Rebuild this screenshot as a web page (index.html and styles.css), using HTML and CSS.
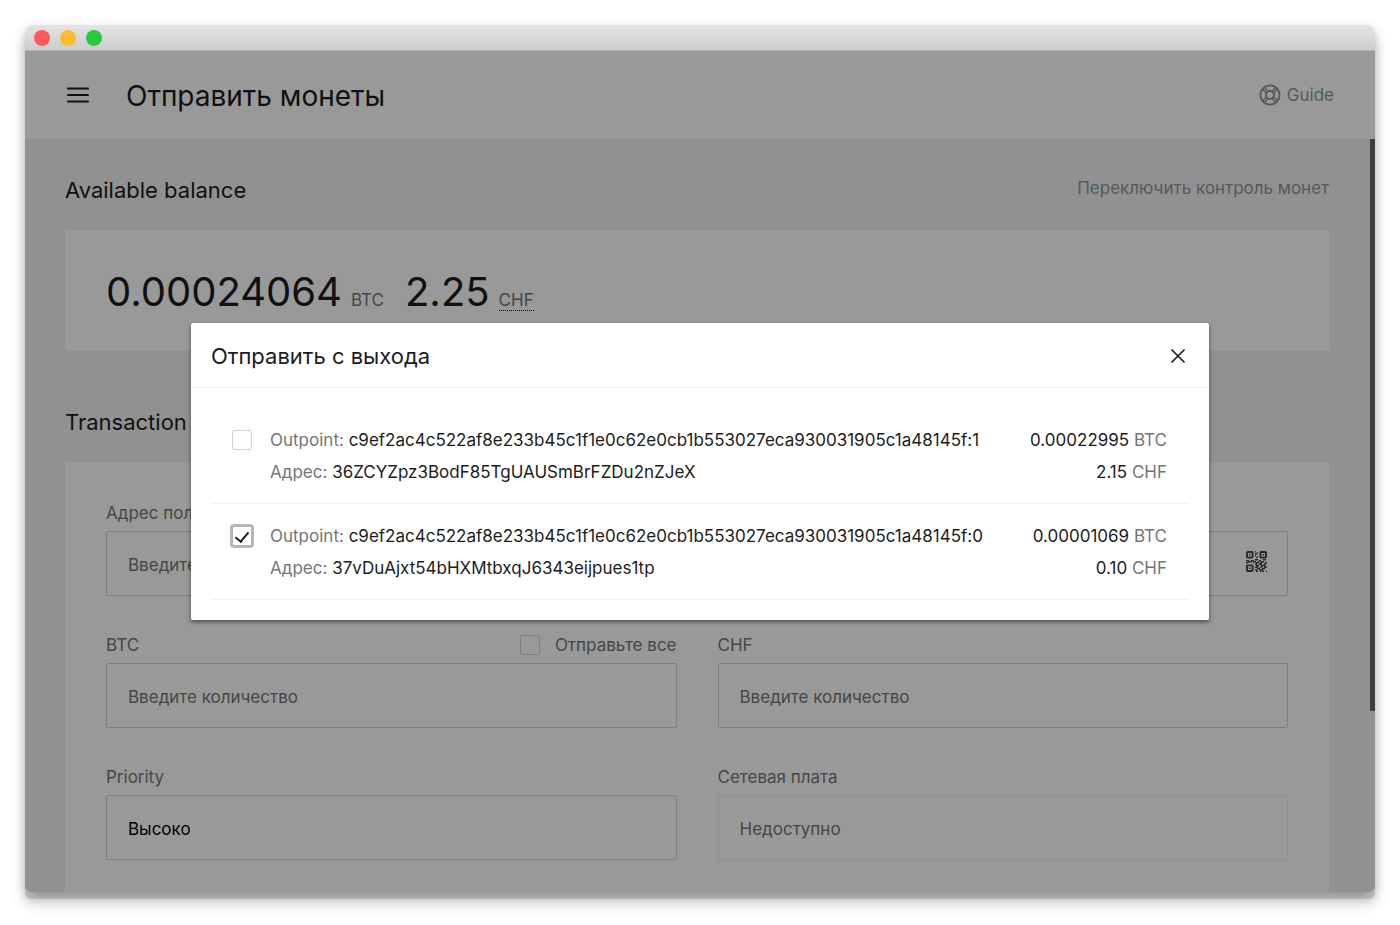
FILE: index.html
```
<!DOCTYPE html>
<html lang="ru">
<head>
  <meta charset="UTF-8">
  <meta name="viewport" content="width=device-width, initial-scale=1.0">
  <title>Отправить монеты</title>
  <link rel="stylesheet" href="styles.css">
</head>
<body>

  <div class="window">
    <div class="titlebar">
      <span class="dot red"></span>
      <span class="dot yellow"></span>
      <span class="dot green"></span>
    </div>

    <div class="app">
      <header class="header">
        <button class="menu-button" type="button" aria-label="Menu">
          <svg width="22" height="16" viewBox="0 0 22 16" fill="none" stroke="currentColor" stroke-width="2" stroke-linecap="round">
            <path d="M1 1.5h20M1 8h20M1 14.5h20" />
          </svg>
        </button>
        <h1>Отправить монеты</h1>
        <a class="guide" href="#guide">
          <svg width="22" height="22" viewBox="0 0 22 22" fill="none" stroke="currentColor" stroke-width="1.9">
            <circle cx="11" cy="11" r="9.6" />
            <circle cx="11" cy="11" r="4" />
            <path d="M3.6 5.2l4 4M5.2 3.6l4 4M18.4 5.2l-4 4M16.8 3.6l-4 4M3.6 16.8l4-4M5.2 18.4l4-4M18.4 16.8l-4-4M16.8 18.4l-4-4" stroke-width="1.4" />
          </svg>
          Guide
        </a>
      </header>

      <div class="content">
        <main class="main">
          <div class="section-head">
            <h2>Available balance</h2>
            <a class="toggle" href="#coin-control">Переключить контроль монет</a>
          </div>
          <div class="card balance">
            <span class="amount">0.00024064</span>
            <span class="unit">BTC</span>
            <span class="amount fiat">2.25</span>
            <span class="unit dotted">CHF</span>
          </div>

          <div class="section-head">
            <h2>Transaction details</h2>
          </div>
          <form class="card form">
            <div class="field wide">
              <label for="address">Адрес получателя</label>
              <div class="input-wrap">
                <input id="address" type="text" placeholder="Введите адрес">
                <button class="qr-button" type="button" aria-label="QR">
                  <svg width="21" height="21" viewBox="0 0 21 21" fill="none" stroke="currentColor">
                    <rect x="1" y="1" width="5.6" height="5.6" rx="0.8" stroke-width="1.9" />
                    <rect x="14.4" y="1" width="5.6" height="5.6" rx="0.8" stroke-width="1.9" />
                    <rect x="1" y="14.4" width="5.6" height="5.6" rx="0.8" stroke-width="1.9" />
                    <path d="M3 3.7h1.5M16.6 3.7h1.5M3 17.3h1.5M9 .7h1M11 1.7h1M9 2.7h2M9 4.7h1M11 5.7h1M10 6.7h1M9 8.7h3M0 9.7h3M5 9.7h3M13 9.7h2M17 8.7h3M2 10.7h4M8 10.7h2M12 10.7h1M15 10.7h3M0 11.7h2M7 11.7h1M10 11.7h3M14 11.7h2M19 11.7h2M9 13.2h2M13 13.2h3M18 13.2h2M10 14.6h3M15 14.6h4M9 16h3M14 16h2M18 16h3M11 17.4h3M16 17.4h3M9 18.8h2M13 18.8h4M10 20.2h2M14 20.2h1M16 20.2h2M20 20.2h1" stroke-width="1.5" />
                  </svg>
                </button>
              </div>
            </div>
            <div class="field">
              <div class="label-row">
                <label for="btc">BTC</label>
                <label class="send-all"><input class="checkbox" type="checkbox">Отправьте все</label>
              </div>
              <input id="btc" type="text" placeholder="Введите количество">
            </div>
            <div class="field">
              <label for="chf">CHF</label>
              <input id="chf" type="text" placeholder="Введите количество">
            </div>
            <div class="field">
              <label for="priority">Priority</label>
              <select id="priority">
                <option>Высоко</option>
              </select>
            </div>
            <div class="field">
              <label for="fee">Сетевая плата</label>
              <input id="fee" type="text" placeholder="Недоступно" disabled>
            </div>
          </form>
        </main>
        <div class="scroll-track"><div class="scroll-thumb"></div></div>
      </div>

      <div class="overlay">
        <div class="modal" role="dialog" aria-labelledby="modal-title">
          <div class="modal-header">
            <h3 id="modal-title">Отправить с выхода</h3>
            <button class="close-button" type="button" aria-label="Close">
              <svg width="14" height="14" viewBox="0 0 14 14" fill="none" stroke="currentColor" stroke-width="1.7" stroke-linecap="round">
                <path d="M1 1l12 12M13 1L1 13" />
              </svg>
            </button>
          </div>
          <ul class="utxos">
            <li>
              <input class="checkbox" id="utxo-1" type="checkbox">
              <label class="utxo" for="utxo-1">
                <span><span class="muted">Outpoint:</span> c9ef2ac4c522af8e233b45c1f1e0c62e0cb1b553027eca930031905c1a48145f:1</span>
                <span><span class="muted">Адрес:</span> 36ZCYZpz3BodF85TgUAUSmBrFZDu2nZJeX</span>
              </label>
              <div class="value">
                <span>0.00022995 <span class="muted">BTC</span></span>
                <span>2.15 <span class="muted">CHF</span></span>
              </div>
            </li>
            <li>
              <input class="checkbox" id="utxo-0" type="checkbox" checked>
              <label class="utxo" for="utxo-0">
                <span><span class="muted">Outpoint:</span> c9ef2ac4c522af8e233b45c1f1e0c62e0cb1b553027eca930031905c1a48145f:0</span>
                <span><span class="muted">Адрес:</span> 37vDuAjxt54bHXMtbxqJ6343eijpues1tp</span>
              </label>
              <div class="value">
                <span>0.00001069 <span class="muted">BTC</span></span>
                <span>0.10 <span class="muted">CHF</span></span>
              </div>
            </li>
          </ul>
        </div>
      </div>
    </div>
  </div>

</body>
</html>
```
FILE: styles.css
```
* {
  box-sizing: border-box;
}

body {
  margin: 0;
  padding: 25px 25px 33px;
  height: 100vh;
  display: flex;
  background: #fff;
  color: #1c1c1c;
  font-family: Inter, "Liberation Sans", sans-serif;
  font-size: 17px;
  line-height: 26px;
}

h1, h2, h3 {
  margin: 0;
  font-weight: 400;
}

a {
  color: #8c959b;
  text-decoration: none;
}

button {
  display: flex;
  padding: 0;
  border: none;
  background: none;
  color: inherit;
  cursor: pointer;
}

.window {
  flex: 1;
  min-width: 0;
  display: flex;
  flex-direction: column;
  border-radius: 8px 8px 5px 5px;
  overflow: hidden;
  box-shadow: 0 7px 1px rgba(0, 0, 0, 0.14), 0 10px 14px rgba(0, 0, 0, 0.26), 0 2px 12px rgba(0, 0, 0, 0.1);
}

.titlebar {
  display: flex;
  align-items: center;
  gap: 10px;
  height: 26px;
  padding: 0 9px;
  background: linear-gradient(#e4e4e4, #cdcdcd);
  border-bottom: 1px solid #b4b4b4;
}

.dot {
  width: 16px;
  height: 16px;
  border-radius: 50%;
}

.red { background: #fc5b57; }
.yellow { background: #fdbc2e; }
.green { background: #27c93f; }

.app {
  position: relative;
  flex: 1;
  min-height: 0;
  display: flex;
  flex-direction: column;
  background: #f2f2f2;
}

.header {
  flex: none;
  display: flex;
  align-items: center;
  gap: 37px;
  height: 88px;
  padding: 0 41px 0 42px;
  background: #fff;
}

.header h1 {
  padding-top: 2px;
  font-size: 28px;
  line-height: 40px;
}

.guide {
  display: flex;
  align-items: center;
  gap: 6px;
  margin-left: auto;
}

.content {
  flex: 1;
  min-height: 0;
  display: flex;
  overflow: hidden;
}

.main {
  flex: 1;
  min-width: 0;
  padding: 34px 40px 0;
}

.section-head {
  display: flex;
  justify-content: space-between;
  height: 58px;
}

.section-head h2 {
  font-size: 22px;
  line-height: 34px;
}

.toggle {
  line-height: 30px;
}

.card {
  background: #fff;
}

.balance {
  display: flex;
  align-items: baseline;
  height: 120px;
  margin-bottom: 54px;
  padding: 37px 41px;
}

.amount {
  font-size: 40px;
  line-height: 48px;
}

.fiat {
  margin-left: 21px;
}

.unit {
  margin-left: 9px;
  color: #757575;
}

.dotted {
  line-height: 20px;
  border-bottom: 1px dotted #000;
}

.form {
  display: grid;
  grid-template-columns: 1fr 1fr;
  gap: 36px 41px;
  padding: 37px 41px;
}

.wide {
  grid-column: span 2;
}

.field {
  display: flex;
  flex-direction: column;
  gap: 5px;
  color: #757575;
}

.label-row {
  display: flex;
  justify-content: space-between;
}

.send-all {
  display: flex;
  align-items: center;
  gap: 15px;
}

.field input[type="text"],
.field select {
  width: 100%;
  height: 65px;
  padding: 2px 21px 0;
  appearance: none;
  border: 1px solid #d4d4d4;
  border-radius: 2px;
  background: #fff;
  color: #000;
  font: inherit;
}

.field input::placeholder {
  color: #757575;
  opacity: 1;
}

.field input[type="text"]:disabled {
  border-color: #efefef;
}

.input-wrap {
  position: relative;
}

.qr-button {
  position: absolute;
  top: 20px;
  right: 21px;
  color: #444;
}

.checkbox {
  flex: none;
  display: flex;
  align-items: center;
  justify-content: center;
  width: 20px;
  height: 20px;
  margin: 0;
  appearance: none;
  border: 1px solid #d4d4d4;
  border-radius: 2px;
  background: #fff;
}

/* Tick drawn as two borders of a rotated box */
.checkbox:checked::after {
  content: "";
  width: 6px;
  height: 11px;
  margin-bottom: 2px;
  border: solid #1c1c1c;
  border-width: 0 2px 2px 0;
  transform: rotate(40deg);
}

.checkbox:checked {
  border-color: #b0b0b0;
  box-shadow: 0 0 0 2px #b8b8b8;
}

.scroll-track {
  width: 6px;
  padding-left: 1px;
}

.scroll-thumb {
  height: 76%;
  background: #6a6a6a;
}

.overlay {
  position: absolute;
  inset: 0;
  display: flex;
  align-items: center;
  justify-content: center;
  background: rgba(0, 0, 0, 0.4);
}

.modal {
  width: 100%;
  max-width: 1018px;
  border-radius: 2px;
  background: #fff;
  box-shadow: 0 2px 4px rgba(0, 0, 0, 0.5);
}

.modal-header {
  display: flex;
  align-items: center;
  justify-content: space-between;
  height: 65px;
  padding: 1px 24px 0 20px;
  border-bottom: 1px solid #f2f2f2;
}

.modal-header h3 {
  font-size: 22px;
  line-height: 32px;
}

.utxos {
  margin: 0;
  padding: 20px;
  list-style: none;
}

.utxos li {
  display: flex;
  gap: 18px;
  height: 96px;
  padding: 16px 22px 15px 21px;
  border-bottom: 1px solid #f2f2f2;
  line-height: 32px;
}

.utxos .checkbox {
  margin-top: 6px;
}

.utxo {
  flex: 1;
}

.utxo > span,
.value > span {
  display: block;
}

.value {
  text-align: right;
}

.muted {
  color: #757575;
}
```
